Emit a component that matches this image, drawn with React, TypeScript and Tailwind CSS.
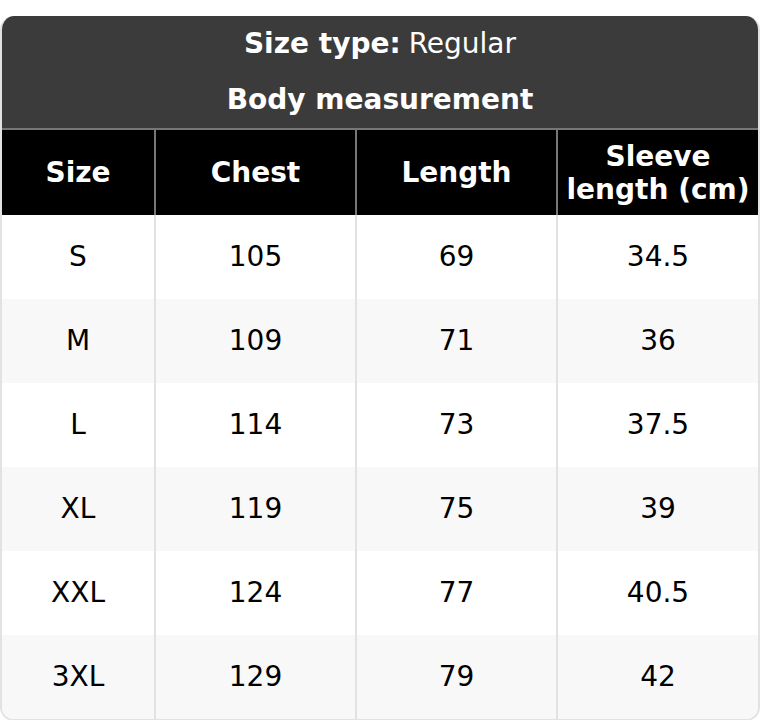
import React from 'react';

const rows = [
  ['S', '105', '69', '34.5'],
  ['M', '109', '71', '36'],
  ['L', '114', '73', '37.5'],
  ['XL', '119', '75', '39'],
  ['XXL', '124', '77', '40.5'],
  ['3XL', '129', '79', '42'],
];

export default function App() {
  return (
    <div className="bg-white w-[760px] h-[720px] pt-4" style={{ fontFamily: '"DejaVu Sans", sans-serif' }}>
      <div className="rounded-[14px] overflow-hidden border-2 border-t-0 border-[#e2e2e2] text-[28px] leading-[1.2]">
        <div className="bg-[#3b3b3b] text-white text-center">
          <div className="h-[56px] flex items-center justify-center">
            <span className="font-bold">Size type:</span>
            <span className="ml-2">Regular</span>
          </div>
          <div className="h-[56px] flex items-center justify-center font-bold">Body measurement</div>
        </div>
        <table className="w-full border-collapse table-fixed">
          <colgroup>
            <col className="w-[153px]" />
            <col className="w-[201px]" />
            <col className="w-[201px]" />
            <col />
          </colgroup>
          <thead>
            <tr className="bg-black text-white font-bold h-[86px] border-t-2 border-[#777]">
              <th className="border-r-2 border-[#777]">Size</th>
              <th className="border-r-2 border-[#777]">Chest</th>
              <th className="border-r-2 border-[#777]">Length</th>
              <th className="leading-[33px]">Sleeve<br />length (cm)</th>
            </tr>
          </thead>
          <tbody>
            {rows.map((r, i) => (
              <tr key={r[0]} className={`h-[84px] text-black ${i % 2 === 1 ? 'bg-[#f8f8f8]' : 'bg-white'}`}>
                <td className="text-center border-r-2 border-[#e2e2e2]">{r[0]}</td>
                <td className="text-center border-r-2 border-[#e2e2e2]">{r[1]}</td>
                <td className="text-center border-r-2 border-[#e2e2e2]">{r[2]}</td>
                <td className="text-center">{r[3]}</td>
              </tr>
            ))}
          </tbody>
        </table>
      </div>
    </div>
  );
}
